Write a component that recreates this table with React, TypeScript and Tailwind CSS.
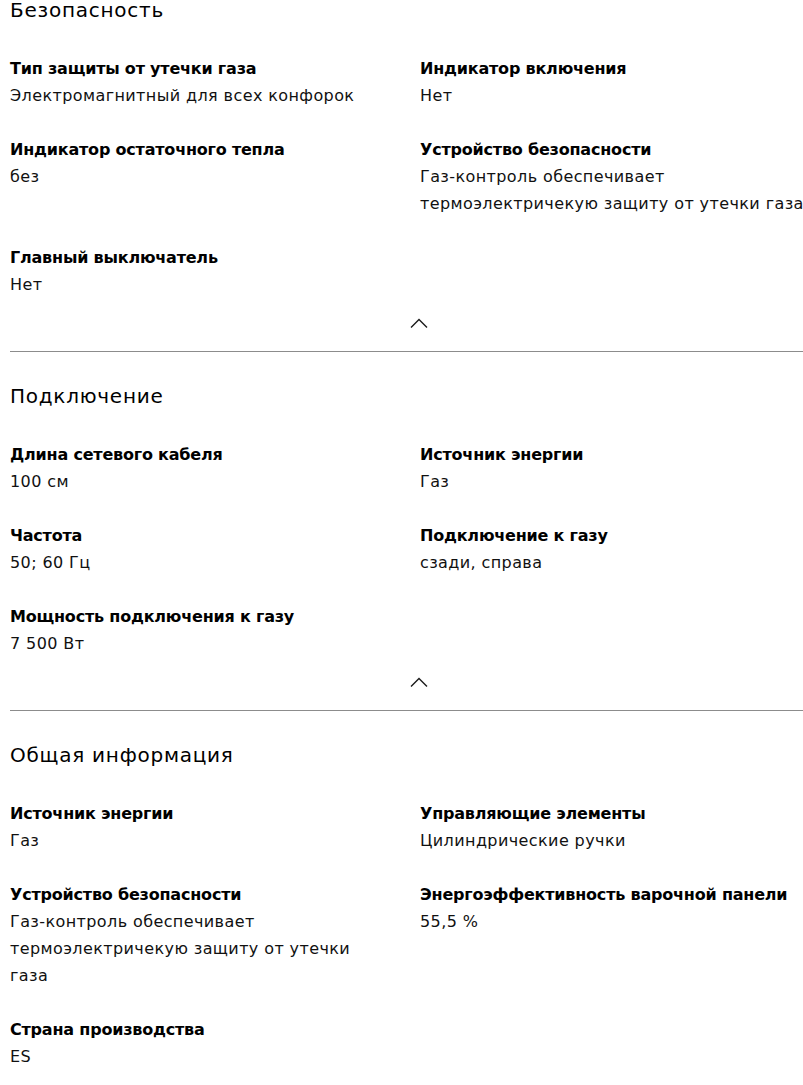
const sections: { title: string; items: { label: string; value: string }[] }[] = [
  {
    title: "Безопасность",
    items: [
      { label: "Тип защиты от утечки газа", value: "Электромагнитный для всех конфорок" },
      { label: "Индикатор включения", value: "Нет" },
      { label: "Индикатор остаточного тепла", value: "без" },
      {
        label: "Устройство безопасности",
        value: "Газ-контроль обеспечивает термоэлектричекую защиту от утечки газа",
      },
      { label: "Главный выключатель", value: "Нет" },
    ],
  },
  {
    title: "Подключение",
    items: [
      { label: "Длина сетевого кабеля", value: "100 см" },
      { label: "Источник энергии", value: "Газ" },
      { label: "Частота", value: "50; 60 Гц" },
      { label: "Подключение к газу", value: "сзади, справа" },
      { label: "Мощность подключения к газу", value: "7 500 Вт" },
    ],
  },
  {
    title: "Общая информация",
    items: [
      { label: "Источник энергии", value: "Газ" },
      { label: "Управляющие элементы", value: "Цилиндрические ручки" },
      {
        label: "Устройство безопасности",
        value: "Газ-контроль обеспечивает термоэлектричекую защиту от утечки газа",
      },
      { label: "Энергоэффективность варочной панели", value: "55,5 %" },
      { label: "Страна производства", value: "ES" },
    ],
  },
];

function ChevronUp() {
  return (
    <svg width="18" height="10" viewBox="0 0 18 10" fill="none">
      <path d="M1 9.5 L9 1.5 L17 9.5" stroke="#1a1a1a" strokeWidth="1.4" />
    </svg>
  );
}

export default function App() {
  return (
    <div
      className="min-h-screen overflow-hidden bg-white pl-[10px] text-[#000]"
      style={{ fontFamily: '"DejaVu Sans", "Liberation Sans", sans-serif' }}
    >
      <div className="w-[818px]">
        {sections.map((section, i) => (
          <section key={section.title} className={i === 0 ? "-mt-[4px]" : ""}>
            {i > 0 && <div className="h-px bg-[#8c8c8c]" />}
            <h2
              className={`text-[20px] leading-[28px] font-normal tracking-[0.75px] ${
                i === 0 ? "" : "mt-[30px]"
              } mb-[31px]`}
            >
              {section.title}
            </h2>
            <div className="grid grid-cols-[370px_1fr] gap-x-[40px] gap-y-[27px]">
              {section.items.map((item) => (
                <div key={item.label} className="text-[16px] leading-[27px]">
                  <div className="font-bold tracking-[-0.2px]">{item.label}</div>
                  <div className="tracking-[0.4px] text-[#111]">{item.value}</div>
                </div>
              ))}
            </div>
            {i < sections.length - 1 && (
              <div className="mt-[20px] mb-[23px] flex h-[10px] justify-center">
                <ChevronUp />
              </div>
            )}
          </section>
        ))}
      </div>
    </div>
  );
}
